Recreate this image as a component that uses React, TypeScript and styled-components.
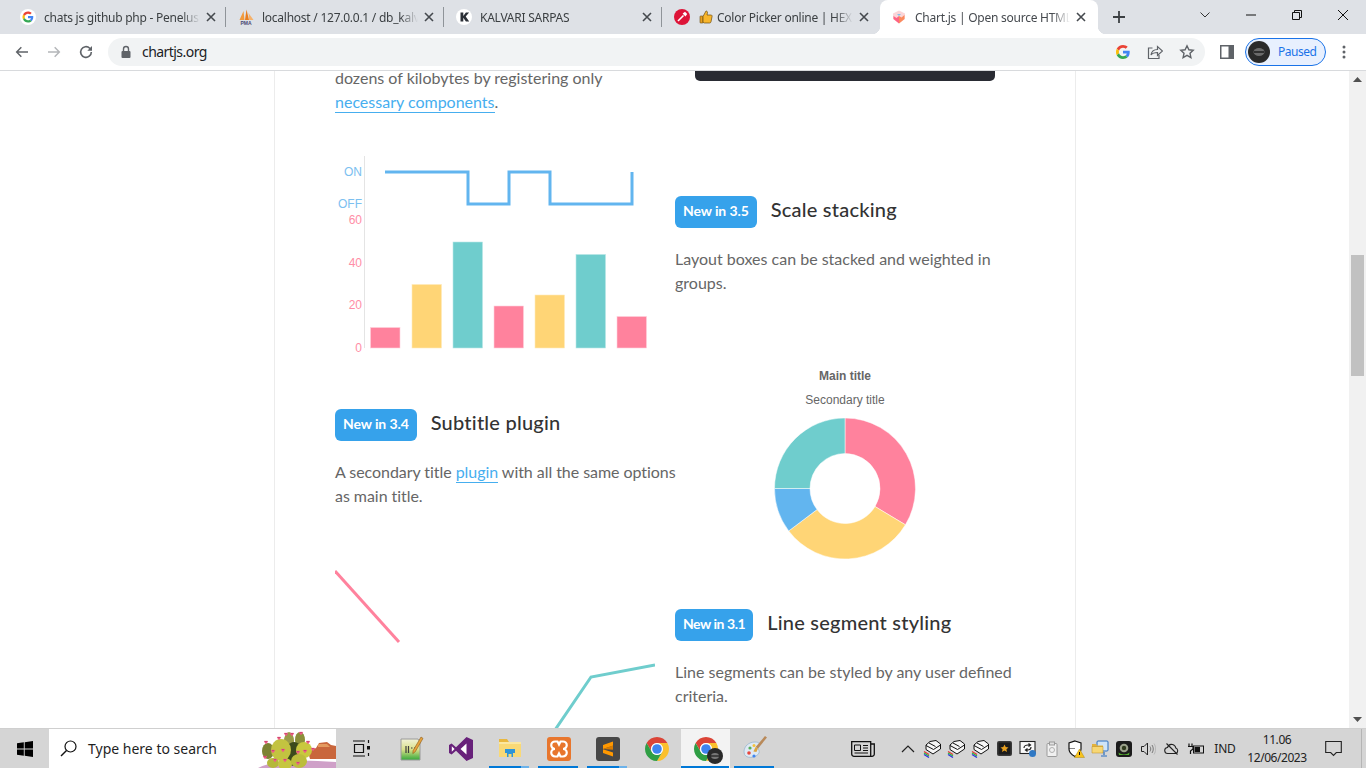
import { FC, ReactNode } from "react";
import styled, { createGlobalStyle } from "styled-components";

const UI_FONT = `"Noto Sans", "Open Sans", sans-serif`;
const PAGE_FONT = `Lato, "Open Sans", sans-serif`;
const CHART_FONT = `"Liberation Sans", Arial, sans-serif`;

const Colors = {
  strip: "#dee1e6",
  pink: "#ff829d",
  yellow: "#ffd576",
  teal: "#6fcdcd",
  blue: "#62b5ef",
  badge: "#36a2eb",
  link: "#46aeef",
  body: "#666666",
  heading: "#333333",
  taskbar: "#d5d5d5",
  taskBlue: "#0078d7",
};

const GlobalStyle = createGlobalStyle`
  html, body { margin: 0; padding: 0; background: #fff; overflow: hidden; }
  * { box-sizing: border-box; }
  svg { display: block; flex: none; }
`;

const Screen = styled.div`
  width: 1366px;
  height: 768px;
  display: flex;
  flex-direction: column;
  overflow: hidden;
  font-family: ${UI_FONT};
`;

/* ---------- tabs ---------- */
const TabStrip = styled.div`
  height: 34px;
  flex: none;
  display: flex;
  padding-left: 8px;
  background: ${Colors.strip};
`;
const Tab = styled.div<{ $active?: boolean; $sep?: boolean }>`
  position: relative;
  width: 218px;
  height: 34px;
  display: flex;
  align-items: center;
  padding: 0 ${(p) => (p.$active ? 11 : p.$sep ? 8 : 10)}px 0 ${(p) => (p.$active ? 11 : 12)}px;
  color: ${(p) => (p.$active ? "#45494e" : "#3c4043")};
  background: ${(p) => (p.$active ? "#fff" : "transparent")};
  border-radius: 8px 8px 0 0;
  border-right: ${(p) => (p.$sep ? "1px solid #9aa0a6" : "none")};
  ${(p) =>
    p.$sep &&
    `border-image: linear-gradient(to bottom, transparent 8px, #8f9499 8px, #8f9499 26px, transparent 26px) 1;`}
  ${(p) =>
    p.$active &&
    `
    &::before, &::after {
      content: "";
      position: absolute;
      bottom: 0;
      width: 8px;
      height: 8px;
    }
    &::before { left: -8px; background: radial-gradient(circle at 0 0, transparent 8px, #fff 8.5px); }
    &::after { right: -8px; background: radial-gradient(circle at 100% 0, transparent 8px, #fff 8.5px); }
  `}
`;
const Favicon = styled.span`
  width: 16px;
  height: 16px;
  flex: none;
  margin-right: 8px;
`;
const ThumbSlot = styled.span`
  width: 14px;
  height: 14px;
  flex: none;
  margin: 0 4px 0 1px;
`;
const TabTitle = styled.span`
  flex: 1;
  min-width: 0;
  overflow: hidden;
  white-space: nowrap;
  font-size: 12px;
  letter-spacing: -0.25px;
  -webkit-mask-image: linear-gradient(to right, #000 calc(100% - 18px), transparent);
  mask-image: linear-gradient(to right, #000 calc(100% - 18px), transparent);
`;
const TabClose = styled.span`
  width: 12px;
  height: 12px;
  flex: none;
  margin-left: 5px;
`;
const NewTab = styled.div`
  width: 22px;
  margin-left: 10px;
  display: flex;
  align-items: center;
  justify-content: center;
`;
const WindowButtons = styled.div`
  margin-left: auto;
  display: flex;
`;
const WindowButton = styled.div`
  width: 46px;
  height: 30px;
  display: flex;
  align-items: center;
  justify-content: center;
`;

/* ---------- toolbar ---------- */
const Toolbar = styled.div`
  height: 37px;
  flex: none;
  display: flex;
  align-items: center;
  padding: 0 0 1px 6px;
  background: #fff;
  border-bottom: 1px solid #d8dadd;
`;
const NavButton = styled.div`
  width: 32px;
  height: 28px;
  display: flex;
  align-items: center;
  justify-content: center;
`;
const Omnibox = styled.div`
  width: 1097px;
  height: 28px;
  margin-left: 6px;
  padding: 0 2px 0 11px;
  display: flex;
  align-items: center;
  border-radius: 14px;
  background: #f1f3f4;
`;
const Url = styled.span`
  flex: 1;
  margin-left: 9px;
  font-size: 14px;
  letter-spacing: -0.55px;
  color: #202124;
`;
const OmniAction = styled.div`
  width: 32px;
  display: flex;
  justify-content: center;
`;
const SidePanel = styled.div`
  width: 40px;
  margin-left: 2px;
  display: flex;
  justify-content: center;
`;
const Profile = styled.div`
  width: 81px;
  height: 28px;
  margin-left: -2px;
  padding-left: 2px;
  display: flex;
  align-items: center;
  gap: 8px;
  border: 1px solid #1a73e8;
  border-radius: 14px;
  background: #e8f0fe;
  color: #1a73e8;
  font-size: 12px;
  letter-spacing: -0.5px;
`;
const MenuDots = styled.div`
  width: 36px;
  display: flex;
  justify-content: center;
`;

/* ---------- page ---------- */
const Viewport = styled.div`
  flex: 1;
  min-height: 0;
  display: flex;
  background: #fff;
`;
const PageArea = styled.div`
  flex: 1;
  min-width: 0;
  display: flex;
  overflow: hidden;
`;
const Article = styled.div`
  width: 802px;
  flex: none;
  margin-left: 274px;
  padding-left: 60px;
  border-left: 1px solid #ececec;
  border-right: 1px solid #ececec;
`;
const Scrolled = styled.div`
  margin-top: -5px;
`;
const Row = styled.div<{ $height: number; $gap?: number }>`
  display: grid;
  grid-template-columns: 340px 340px;
  height: ${(p) => p.$height}px;
  margin-top: ${(p) => p.$gap ?? 0}px;
`;
const Feature = styled.div<{ $top: number }>`
  padding-top: ${(p) => p.$top}px;
`;
const Heading = styled.div`
  display: flex;
  align-items: center;
  gap: 14px;
  margin-bottom: 19px;
`;
const Badge = styled.span<{ $narrow?: boolean }>`
  height: 32px;
  padding: 0 8px 4px;
  display: flex;
  align-items: center;
  border-radius: 6px;
  background: ${Colors.badge};
  color: #fff;
  font-family: ${PAGE_FONT};
  font-size: 14px;
  font-weight: 700;
  letter-spacing: ${(p) => (p.$narrow ? "-0.45px" : "-0.1px")};
`;
const Title = styled.h3`
  margin: 0;
  padding-bottom: 7px;
  font-family: ${PAGE_FONT};
  font-size: 20px;
  font-weight: 500;
  letter-spacing: 0.22px;
  color: ${Colors.heading};
`;
const Text = styled.p<{ $bleed?: boolean }>`
  margin: 0 ${(p) => (p.$bleed ? "-10px" : "0")} 0 0;
  font-family: ${PAGE_FONT};
  font-size: 16px;
  line-height: 24px;
  letter-spacing: ${(p) => (p.$bleed ? "-0.05px" : "0")};
  color: ${Colors.body};
`;
const TextLink = styled.a`
  color: ${Colors.link};
  padding-bottom: 1px;
  border-bottom: 1px solid ${Colors.link};
`;
const CodeEnd = styled.div`
  width: 300px;
  height: 15px;
  margin-left: 20px;
  border-radius: 0 0 5px 5px;
  background: #292b33;
`;

const Scrollbar = styled.div`
  width: 17px;
  flex: none;
  padding: 0 2px;
  display: flex;
  flex-direction: column;
  align-items: center;
  background: #f1f1f1;
`;
const ScrollArrow = styled.div<{ $down?: boolean }>`
  height: 17px;
  flex: none;
  display: flex;
  align-items: center;
  justify-content: center;
  transform: ${(p) => (p.$down ? "rotate(180deg)" : "none")};
`;
const ScrollTrack = styled.div`
  flex: 1;
  width: 100%;
  padding-top: 167px;
`;
const ScrollThumb = styled.div`
  height: 121px;
  background: #c1c1c1;
`;

/* ---------- taskbar ---------- */
const Taskbar = styled.div`
  height: 40px;
  flex: none;
  display: flex;
  background: ${Colors.taskbar};
  border-top: 1px solid #cfcfcf;
`;
const StartButton = styled.div`
  width: 49px;
  display: flex;
  align-items: center;
  justify-content: center;
`;
const SearchBox = styled.div`
  width: 287px;
  display: flex;
  align-items: center;
  padding-left: 11px;
  background: #fff;
  color: #1f1f1f;
  overflow: hidden;
`;
const SearchText = styled.span`
  margin-left: 11px;
  font-size: 14px;
  white-space: nowrap;
  flex: 1;
`;
const TaskView = styled.div`
  width: 51px;
  display: flex;
  align-items: center;
  justify-content: center;
`;
const AppSlot = styled.div<{ $running?: boolean; $active?: boolean; $stack?: boolean }>`
  position: relative;
  width: 49px;
  display: flex;
  align-items: center;
  justify-content: center;
  background: ${(p) => (p.$active ? "#f3f3f3" : "transparent")};
  &::after {
    content: ${(p) => (p.$running ? '""' : "none")};
    position: absolute;
    bottom: 0;
    left: ${(p) => (p.$active ? 0 : "4px")};
    right: ${(p) => (p.$active ? "1px" : "5px")};
    height: 2px;
    background: ${(p) =>
      p.$stack
        ? `linear-gradient(to right, ${Colors.taskBlue} 80%, #6cb2ea 80%)`
        : Colors.taskBlue};
  }
`;
const ProfileDot = styled.span`
  position: absolute;
  left: 26px;
  top: 19px;
`;
const Tray = styled.div`
  margin-left: auto;
  margin-right: 4px;
  display: flex;
  align-items: center;
  height: 100%;
  border-right: 1px solid #b5b5b5;
  padding-right: 7px;
`;
const NewsSlot = styled.div`
  width: 48px;
  margin-right: 9px;
  display: flex;
  justify-content: center;
`;
const TraySlot = styled.div`
  width: 24px;
  display: flex;
  justify-content: center;
`;
const Lang = styled.div`
  width: 34px;
  text-align: center;
  font-size: 12px;
  letter-spacing: -0.2px;
  color: #222;
`;
const Clock = styled.div`
  width: 70px;
  text-align: center;
  font-size: 12px;
  line-height: 18px;
  letter-spacing: -0.45px;
  color: #222;
`;
const NotifySlot = styled.div`
  width: 42px;
  display: flex;
  justify-content: center;
`;

/* ---------- small icons ---------- */
const Ico: FC<{ size?: number; w?: number; h?: number; view?: string; children: ReactNode }> = ({
  size = 16,
  w,
  h,
  view = "0 0 24 24",
  children,
}) => (
  <svg width={w ?? size} height={h ?? size} viewBox={view} fill="none">
    {children}
  </svg>
);

const GoogleG: FC<{ size?: number }> = ({ size = 16 }) => (
  <Ico size={size} view="0 0 48 48">
    <path fill="#EA4335" d="M24 9.5c3.54 0 6.71 1.22 9.21 3.6l6.85-6.85C35.9 2.38 30.47 0 24 0 14.62 0 6.51 5.38 2.56 13.22l7.98 6.19C12.43 13.72 17.74 9.5 24 9.5z" />
    <path fill="#4285F4" d="M46.98 24.55c0-1.57-.15-3.09-.38-4.55H24v9.02h12.94c-.58 2.96-2.26 5.48-4.78 7.18l7.73 6c4.51-4.18 7.09-10.36 7.09-17.65z" />
    <path fill="#FBBC05" d="M10.53 28.59c-.48-1.45-.76-2.99-.76-4.59s.27-3.14.76-4.59l-7.98-6.19C.92 16.46 0 20.12 0 24c0 3.88.92 7.54 2.56 10.78l7.97-6.19z" />
    <path fill="#34A853" d="M24 48c6.48 0 11.93-2.13 15.89-5.81l-7.73-6c-2.15 1.45-4.92 2.3-8.16 2.3-6.26 0-11.57-4.22-13.47-9.91l-7.98 6.19C6.51 42.62 14.62 48 24 48z" />
  </Ico>
);

const GoogleFavicon = () => (
  <Ico view="0 0 16 16">
    <circle cx="8" cy="8" r="8" fill="#fff" />
    <g transform="translate(2.5 2.5) scale(0.229)">
      <path fill="#EA4335" d="M24 9.5c3.54 0 6.71 1.22 9.21 3.6l6.85-6.85C35.9 2.38 30.47 0 24 0 14.62 0 6.51 5.38 2.56 13.22l7.98 6.19C12.43 13.72 17.74 9.5 24 9.5z" />
      <path fill="#4285F4" d="M46.98 24.55c0-1.57-.15-3.09-.38-4.55H24v9.02h12.94c-.58 2.96-2.26 5.48-4.78 7.18l7.73 6c4.51-4.18 7.09-10.36 7.09-17.65z" />
      <path fill="#FBBC05" d="M10.53 28.59c-.48-1.45-.76-2.99-.76-4.59s.27-3.14.76-4.59l-7.98-6.19C.92 16.46 0 20.12 0 24c0 3.88.92 7.54 2.56 10.78l7.97-6.19z" />
      <path fill="#34A853" d="M24 48c6.48 0 11.93-2.13 15.89-5.81l-7.73-6c-2.15 1.45-4.92 2.3-8.16 2.3-6.26 0-11.57-4.22-13.47-9.91l-7.98 6.19C6.51 42.62 14.62 48 24 48z" />
    </g>
  </Ico>
);

const PmaFavicon = () => (
  <Ico view="0 0 16 16">
    <path fill="#f29a3c" d="M1.500 11 5.500 2 6.500 11z" />
    <path fill="#e87d1e" d="M7 11 8.500 0.500 11 11z" />
    <path fill="#f6b26b" d="M11.200 11 10.500 4 15.500 11z" />
    <text x="8" y="15.500" textAnchor="middle" fontFamily={CHART_FONT} fontSize="5" fontWeight="700" fill="#4a4a72">PMA</text>
  </Ico>
);

const KFavicon = () => (
  <Ico view="0 0 16 16">
    <circle cx="8" cy="8" r="8" fill="#fff" />
    <path fill="#2b2f36" d="M4.500 3.500h2.800v3.400l2.600-3.400h3.200L9.700 7.600l3.500 4.900H9.900L7.300 8.800v3.700H4.500z" />
  </Ico>
);

const PickerFavicon = () => (
  <Ico view="0 0 16 16">
    <circle cx="8" cy="8" r="8" fill="#dd1438" />
    <path stroke="#fff" strokeWidth="1.600" d="M4 12 9.500 6.500" />
    <path fill="#fff" d="M8.600 4.600 11 2.800l2.200 2.200-1.800 2.400z" />
  </Ico>
);

const ThumbIcon = () => (
  <Ico w={14} h={14} view="0 0 14 14">
    <rect x="1" y="6" width="3" height="7" rx=".6" fill="#e8a020" stroke="#6a4a10" strokeWidth=".6" />
    <path fill="#f8b62c" stroke="#6a4a10" strokeWidth=".7" d="M4 6.500 7 1c1.300 0 1.700 1 1.400 2.200L8 5h4c1 0 1.400 1 1 1.800l-1 5c-.2.8-.7 1.200-1.400 1.200H5.500L4 12.400z" />
  </Ico>
);

const ChartFavicon = () => (
  <Ico view="0 0 16 16">
    <path fill="#fbd5d8" d="M8 1.500 14 4.500v5.500l-6 4.500L2 10V4.500z" />
    <path fill="#fe6384" d="M2.500 7 5.500 9 8 7v7.500L2.500 10z" />
    <path fill="#fb8a5c" d="M13.500 6 10.500 8.500 8 7v7.500l5.500-4.500z" />
    <path fill="#7fc4e8" d="M6 5h4L8 7z" />
  </Ico>
);

const CloseX = () => (
  <Ico size={12} view="0 0 12 12">
    <path stroke="#45494e" strokeWidth="1.600" d="M2 2l8 8M10 2l-8 8" />
  </Ico>
);

const ChromeLogo: FC<{ size?: number }> = ({ size = 24 }) => (
  <Ico size={size} view="4 4 40 40">
    <path fill="#db4437" d="M6.680 14A20 20 0 0 1 41.320 14H24A10 10 0 0 0 15.340 29z" />
    <path fill="#fbc02d" d="M41.320 14A20 20 0 0 1 24 44L32.660 29A10 10 0 0 0 24 14z" />
    <path fill="#2f9e44" d="M24 44A20 20 0 0 1 6.680 14L15.340 29A10 10 0 0 0 32.660 29z" />
    <circle cx="24" cy="24" r="10" fill="#fff" />
    <circle cx="24" cy="24" r="8" fill="#3f84ef" />
  </Ico>
);

const Cactus = () => (
  <svg width="78" height="38" viewBox="0 0 78 38">
    <path fill="#cfa0c8" d="M0 38c14-7 34-9 78-6v6z" />
    <path fill="#c9663c" d="M50 22l8-4 3-5 8-1 4 3 5 1v13H52z" />
    <path fill="#e49a5f" d="M60 14h9l3 3H60z" />
    <g transform="translate(-5 0)">
      <ellipse cx="15" cy="21" rx="6" ry="8" fill="#7d8232" />
      <ellipse cx="36" cy="11" rx="5" ry="9" fill="#9a9c48" />
      <ellipse cx="47" cy="10" rx="5" ry="8" fill="#8b8f3a" />
      <ellipse cx="41" cy="24" rx="9" ry="12" fill="#3c4a1c" />
      <ellipse cx="28" cy="20" rx="10" ry="11" fill="#c3c340" />
      <ellipse cx="51" cy="20" rx="8" ry="8" fill="#c9c83e" />
      <ellipse cx="46" cy="31" rx="8" ry="7" fill="#bcbd3c" />
      <ellipse cx="20" cy="33" rx="6" ry="5" fill="#b5b83a" />
      <ellipse cx="32" cy="34" rx="7" ry="6" fill="#c6c640" />
      {[[13, 12], [20, 21], [26, 8], [33, 4], [39, 4], [48, 3], [55, 12], [30, 20], [45, 22], [52, 21], [12, 27], [22, 30], [32, 30], [45, 33], [60, 19]].map(([x, y]) => (
        <path key={`${x}-${y}`} stroke="#ef5a86" strokeWidth="1.600" d={`M${x - 1.5} ${y - 1}l1.500 2 1.500-2`} />
      ))}
    </g>
  </svg>
);

const NotepadIcon = () => (
  <Ico w={24} h={26} view="0 0 24 26">
    <defs>
      <linearGradient id="npad" x1="0" y1="0" x2="0" y2="1">
        <stop offset="0" stopColor="#f2f2d8" />
        <stop offset=".5" stopColor="#d9e08a" />
        <stop offset="1" stopColor="#35a83a" />
      </linearGradient>
    </defs>
    <path fill="url(#npad)" stroke="#9a9a9a" d="M1 3h17l2 3v18H1z" />
    <path stroke="#3d3d3d" strokeWidth="1.200" d="M6 10v7M8.500 10v7M11 12h1.500M14 12h1" />
    <path fill="#e8a33d" stroke="#8a5a18" strokeWidth=".6" d="M21 1l2 1.400-7.800 13.400-2.400 1.800.3-3z" />
  </Ico>
);

const VsIcon = () => (
  <Ico w={24} h={24} view="0 0 24 24">
    <path fill="#68217a" d="M17.500 0 24 3v18l-6.500 3L7 13.800 2.600 17.400 0 16V8l2.600-1.400L7 10.200z" />
    <path fill="#fff" d="M17.500 6.500 11.500 12l6 5.500zM2.800 9.300v5.400L5.600 12z" />
  </Ico>
);

const FolderIcon = () => (
  <Ico w={22} h={20} view="0 0 22 20">
    <path fill="#e9b83f" d="M0 0h8l2 3H0z" />
    <path fill="#f9d976" d="M0 3h22v15H0z" />
    <path fill="#fbe7a0" d="M0 3h22v2H0z" />
    <path fill="#2f95d8" d="M6 10h10v4h-2v4H8v-4H6z" />
    <path fill="#f9d976" d="M9.500 15h3v3h-3z" />
  </Ico>
);

const XamppIcon = () => (
  <Ico size={24} view="0 0 24 24">
    <rect width="24" height="24" rx="3" fill="#e8762d" />
    <path stroke="#fff" strokeWidth="2.200" d="M8 4.500h2.500l1.500 3 1.500-3H16a3.500 3.500 0 0 1 0 7.500 3.500 3.500 0 0 1 0 7.500h-2.500L12 16.500l-1.500 3H8A3.500 3.500 0 0 1 8 12a3.500 3.500 0 0 1 0-7.500z" />
  </Ico>
);

const SublimeIcon = () => (
  <Ico size={24} view="0 0 24 24">
    <rect width="24" height="24" rx="3" fill="#474747" />
    <path fill="#ff9800" d="M17 4.500v4.200L7 12V8zM7 12.200l10 3.300v4L7 16z" />
    <path fill="#d67a00" d="M7 12l10-3.400v4.200z" />
  </Ico>
);

const PaintIcon = () => (
  <Ico size={26} view="0 0 26 26">
    <path fill="#dfe9f3" stroke="#8fb0cc" strokeWidth=".7" d="M2 16c0-6 5-10 11-10 4 0 6 2 4 5-2 2 1 3 0 6-2 5-15 7-15-1z" />
    <circle cx="7" cy="17" r="1.800" fill="#e8453c" />
    <circle cx="8" cy="12" r="1.600" fill="#57b05a" />
    <circle cx="12" cy="9.500" r="1.500" fill="#f5c33b" />
    <circle cx="12" cy="20" r="1.600" fill="#3f84ef" />
    <path fill="#b98a5a" d="M23 0l2 1.500-9 11-2.400-1.600z" />
    <path fill="#d9a441" d="M13.600 10.900l2.400 1.600-1.600 3.500-3-.6z" />
  </Ico>
);

const Printer = () => (
  <Ico size={18} view="0 0 18 18">
    <path fill="#f6f6f6" stroke="#111" strokeWidth="1" d="M7 1.500l6-1 4.500 3.500v5L10 14 3 9.500V5z" />
    <path stroke="#111" strokeWidth="1" d="M3 5.500l7.500 4 7-4.500M6 3l6.500 3.500" />
    <path stroke="#e33" strokeWidth="1.300" d="M1 11.500l5 3" />
    <path stroke="#2b4" strokeWidth="1.300" d="M1 13l5 3" />
    <path stroke="#33d" strokeWidth="1.300" d="M1 14.500l5 3" />
  </Ico>
);

const Tray1 = () => (
  <Ico size={15} view="0 0 15 15">
    <rect width="15" height="15" rx="2" fill="#3a3a3a" />
    <rect x="1.500" y="1.500" width="12" height="12" fill="#1c1c1c" />
    <path fill="#e8a020" d="M7.500 3.500l1.200 2.600 2.800.3-2.100 1.800.6 2.800-2.500-1.400L5 11l.6-2.800-2.100-1.800 2.800-.3z" />
  </Ico>
);
const Tray2 = () => (
  <Ico size={18} view="0 0 18 18">
    <rect x="1" y="1.500" width="15" height="12" fill="#fafafa" stroke="#222" strokeWidth="1.100" />
    <path stroke="#222" strokeWidth="1.200" d="M5 8c0-2 2-3 4-3h2M9.500 3.500 11.500 5 9.500 6.500M12 7c0 2-1.500 3-3.500 3H7M8.500 8.500 6.500 10l2 1.500" />
    <circle cx="13.500" cy="13.500" r="3.500" fill="#2f78c4" />
  </Ico>
);
const Tray3 = () => (
  <Ico size={16} view="0 0 16 16">
    <rect x="3" y="2.500" width="10" height="13" rx="1" fill="#f0f0f0" stroke="#9a9a9a" />
    <rect x="5.500" y="1" width="5" height="3" fill="#e0e0e0" stroke="#9a9a9a" />
    <circle cx="8" cy="9" r="2.500" stroke="#b0b0b0" />
  </Ico>
);
const Tray4 = () => (
  <Ico size={18} view="0 0 18 18">
    <path fill="#fff" stroke="#111" strokeWidth="1.200" d="M8 1l6 2v6c0 4-3 6-6 7.500C5 15 2 13 2 9V3z" />
    <path fill="#111" d="M8 1v7.500H2V9h6v7.500L8 8.500z" />
    <path fill="#f8c31c" stroke="#a07a00" strokeWidth=".4" d="M12.500 9l5 8.500h-10z" />
    <path stroke="#111" d="M12.500 12v3" />
  </Ico>
);
const Tray5 = () => (
  <Ico size={18} view="0 0 18 18">
    <rect x="6" y="1" width="11" height="10" rx="1" fill="#cfe4f8" stroke="#2a6fc0" />
    <path fill="#e3b23c" d="M1 4h4l1 1.500h6V13H1z" />
    <path fill="#f7d774" d="M1 6.500h11V13H1z" stroke="#b98a20" strokeWidth=".5" />
    <path stroke="#2a6fc0" strokeWidth="1.200" d="M13 12v3M10 16h6" />
  </Ico>
);
const Tray6 = () => (
  <Ico size={16} view="0 0 16 16">
    <rect width="16" height="16" rx="3" fill="#1b1b1b" />
    <circle cx="8" cy="7" r="4.300" fill="#9aa08a" />
    <circle cx="8" cy="7" r="2.200" fill="#2f3a1d" />
    <path fill="#55b030" d="M2.500 11.500C5 14 11 14 13.500 11.500L13 14H3z" />
  </Ico>
);
const Speaker = () => (
  <Ico size={16} view="0 0 16 16">
    <path stroke="#222" d="M1.500 5.500h2.500L7.500 2v12L4 10.500H1.500z" />
    <path stroke="#777" d="M10 5.500c1 1.500 1 3.500 0 5M12 4c1.700 2.500 1.700 5.500 0 8" />
    <path stroke="#b5b5b5" d="M14 2.500c2.200 3.500 2.200 7.500 0 11" />
  </Ico>
);
const CloudOff = () => (
  <Ico size={16} view="0 0 16 16">
    <path fill="#d5d5d5" stroke="#222" strokeWidth="1.100" d="M4 12.500a3 3 0 0 1-.5-6C4.300 4 6.500 3 8.500 3.500c2 .5 3 1.800 3.300 3.500a3 3 0 0 1 .2 5.500z" />
    <path stroke="#222" strokeWidth="1.100" d="M2.500 2.500l11 11" />
  </Ico>
);
const BatteryPlug = () => (
  <Ico size={16} view="0 0 16 16">
    <path stroke="#111" strokeWidth="1.200" d="M1 2.500v3M4 2.500v3M0 5.500h5V8l-2.500 2V13" />
    <rect x="5.500" y="5" width="10" height="7" fill="#d5d5d5" stroke="#111" />
    <rect x="6.500" y="6" width="5.500" height="5" fill="#111" />
  </Ico>
);

/* ---------- charts ---------- */
const AxisText = styled.text<{ $color: string }>`
  font-family: ${CHART_FONT};
  font-size: 12px;
  fill: ${(p) => p.$color};
`;

const bars = [
  { x: 370.5, top: 327.5, fill: Colors.pink, edge: "#ffd1dc" },
  { x: 412, top: 284.5, fill: Colors.yellow, edge: "#ffeabb" },
  { x: 453, top: 242, fill: Colors.teal, edge: "#b8e6e6" },
  { x: 494, top: 306, fill: Colors.pink, edge: "#ffd1dc" },
  { x: 535, top: 295, fill: Colors.yellow, edge: "#ffeabb" },
  { x: 576, top: 254.5, fill: Colors.teal, edge: "#b8e6e6" },
  { x: 617, top: 316.5, fill: Colors.pink, edge: "#ffd1dc" },
];

const StackedChart = () => (
  <svg width="320" height="215" viewBox="335 150 320 215" fill="none">
    <path stroke="#e4e4e4" d="M364.500 156V348" />
    <AxisText $color="#7cc0f0" x="362" y="176" textAnchor="end">ON</AxisText>
    <AxisText $color="#7cc0f0" x="362" y="208" textAnchor="end">OFF</AxisText>
    {[["60", 224], ["40", 267], ["20", 309], ["0", 352]].map(([label, y]) => (
      <AxisText key={label} $color="#ff8ea6" x="362" y={y} textAnchor="end">{label}</AxisText>
    ))}
    <path stroke={Colors.blue} strokeWidth="3" d="M385 172H468V204H509V172H550V204H632V172" />
    {bars.map((b) => (
      <rect key={b.x} x={b.x} y={b.top} width="29.500" height={348 - b.top} fill={b.fill} stroke={b.edge} strokeWidth=".6" />
    ))}
  </svg>
);

const arc = (from: number, to: number) => {
  const cx = 845;
  const cy = 488.5;
  const R = 70.5;
  const r = 35;
  const pt = (rad: number, deg: number) => {
    const a = ((deg - 90) * Math.PI) / 180;
    return `${cx + rad * Math.cos(a)} ${cy + rad * Math.sin(a)}`;
  };
  const large = to - from > 180 ? 1 : 0;
  return `M${pt(R, from)}A${R} ${R} 0 ${large} 1 ${pt(R, to)}L${pt(r, to)}A${r} ${r} 0 ${large} 0 ${pt(r, from)}Z`;
};

const slices = [
  { from: 0, to: 121, fill: Colors.pink },
  { from: 121, to: 233, fill: Colors.yellow },
  { from: 233, to: 270, fill: Colors.blue },
  { from: 270, to: 360, fill: Colors.teal },
];

const DoughnutChart = () => (
  <svg width="340" height="200" viewBox="675 365 340 200" fill="none">
    <AxisText $color="#666" x="845" y="380" textAnchor="middle" fontWeight="700">Main title</AxisText>
    <AxisText $color="#666" x="845" y="404" textAnchor="middle">Secondary title</AxisText>
    {slices.map((s) => (
      <path key={s.from} d={arc(s.from, s.to)} fill={s.fill} stroke="#fff" strokeWidth=".5" />
    ))}
  </svg>
);

const SegmentChart = () => (
  <svg width="320" height="200" viewBox="335 565 320 200" fill="none">
    <path stroke={Colors.pink} strokeWidth="3" d="M335 571 399 642" />
    <path stroke={Colors.teal} strokeWidth="3" d="M655 665 591 677 540 752" />
  </svg>
);

/* ---------- data ---------- */
const tabs = [
  { title: "chats js github php - Penelusuran Google", icon: <GoogleFavicon />, sep: true },
  { title: "localhost / 127.0.0.1 / db_kalvari", icon: <PmaFavicon />, sep: true },
  { title: "KALVARI SARPAS", icon: <KFavicon />, sep: true },
  { title: "Color Picker online | HEX Color Picker", icon: <PickerFavicon />, thumb: true },
  { title: "Chart.js | Open source HTML5 Charts", icon: <ChartFavicon />, active: true },
];

const trayIcons = [<Printer />, <Printer />, <Printer />, <Tray1 />, <Tray2 />, <Tray3 />, <Tray4 />, <Tray5 />, <Tray6 />, <Speaker />, <CloudOff />, <BatteryPlug />];

export default function App() {
  return (
    <Screen>
      <GlobalStyle />
      <TabStrip>
        {tabs.map((t) => (
          <Tab key={t.title} $active={t.active} $sep={t.sep}>
            <Favicon>{t.icon}</Favicon>
            {t.thumb && (
              <ThumbSlot>
                <ThumbIcon />
              </ThumbSlot>
            )}
            <TabTitle>{t.title}</TabTitle>
            <TabClose>
              <CloseX />
            </TabClose>
          </Tab>
        ))}
        <NewTab>
          <Ico size={14} view="0 0 14 14">
            <path stroke="#3c4043" strokeWidth="1.800" d="M7 1v12M1 7h12" />
          </Ico>
        </NewTab>
        <WindowButtons>
          <WindowButton>
            <Ico size={12} view="0 0 12 12">
              <path stroke="#333" d="M1.500 3.500 6 8l4.500-4.500" />
            </Ico>
          </WindowButton>
          <WindowButton>
            <Ico size={12} view="0 0 12 12">
              <path stroke="#111" d="M1 6h10" />
            </Ico>
          </WindowButton>
          <WindowButton>
            <Ico size={12} view="0 0 12 12">
              <path stroke="#111" d="M1.500 3.500h7v7h-7zM3.500 3.500v-2h7v7h-2" />
            </Ico>
          </WindowButton>
          <WindowButton>
            <Ico size={12} view="0 0 12 12">
              <path stroke="#111" d="M1 1l10 10M11 1 1 11" />
            </Ico>
          </WindowButton>
        </WindowButtons>
      </TabStrip>

      <Toolbar>
        <NavButton>
          <Ico>
            <path stroke="#5f6368" strokeWidth="2.200" d="M21 12H4M11 5l-7 7 7 7" />
          </Ico>
        </NavButton>
        <NavButton>
          <Ico>
            <path stroke="#b4b6b9" strokeWidth="2.200" d="M3 12h17M13 5l7 7-7 7" />
          </Ico>
        </NavButton>
        <NavButton>
          <Ico>
            <path stroke="#5f6368" strokeWidth="2.400" d="M20 12a8 8 0 1 1-2.400-5.700L20 8.500" />
            <path fill="#5f6368" d="M21 3v7h-7z" />
          </Ico>
        </NavButton>
        <Omnibox>
          <Ico size={14} view="0 0 14 14">
            <rect x="2.500" y="6" width="9" height="7" rx="1" fill="#5f6368" />
            <path stroke="#5f6368" strokeWidth="1.400" d="M4.500 6V4a2.500 2.500 0 0 1 5 0v2" />
          </Ico>
          <Url>chartjs.org</Url>
          <OmniAction>
            <GoogleG size={14} />
          </OmniAction>
          <OmniAction>
            <Ico size={16} view="0 0 16 16">
              <path stroke="#5f6368" strokeWidth="1.200" d="M5.500 4H1.500v10.500h10.500V11" />
              <path stroke="#5f6368" strokeWidth="1.200" d="M4 11c.5-3.500 3-5.500 6.500-5.500V2.500l5 4.500-5 4.500V8.500C8 8.500 5.500 9 4 11z" />
            </Ico>
          </OmniAction>
          <OmniAction>
            <Ico size={16} view="0 0 16 16">
              <path stroke="#5f6368" strokeWidth="1.400" d="M8 1.800l1.900 4 4.300.5-3.200 3 .9 4.300L8 11.400l-3.900 2.200.9-4.300-3.200-3 4.300-.5z" />
            </Ico>
          </OmniAction>
        </Omnibox>
        <SidePanel>
          <Ico size={14} view="0 0 14 14">
            <rect width="14" height="14" fill="#5f6368" />
            <rect x="1.500" y="1.500" width="7" height="11" fill="#fff" />
          </Ico>
        </SidePanel>
        <Profile>
          <Ico size={22} view="0 0 22 22">
            <circle cx="11" cy="11" r="11" fill="#2a2a2a" />
            <ellipse cx="11" cy="11" rx="5.500" ry="4" fill="#6b6b6b" />
            <path stroke="#1c1c1c" strokeWidth="1.500" d="M6 11h10" />
          </Ico>
          Paused
        </Profile>
        <MenuDots>
          <Ico size={16} view="0 0 16 16">
            <circle cx="8" cy="3" r="1.500" fill="#5f6368" />
            <circle cx="8" cy="8" r="1.500" fill="#5f6368" />
            <circle cx="8" cy="13" r="1.500" fill="#5f6368" />
          </Ico>
        </MenuDots>
      </Toolbar>

      <Viewport>
        <PageArea>
          <Article>
            <Scrolled>
              <Row $height={48}>
                <Text>
                  dozens of kilobytes by registering only{" "}
                  <TextLink>necessary components</TextLink>.
                </Text>
                <CodeEnd />
              </Row>
              <Row $height={215} $gap={36}>
                <StackedChart />
                <Feature $top={46}>
                  <Heading>
                    <Badge>New in 3.5</Badge>
                    <Title>Scale stacking</Title>
                  </Heading>
                  <Text>Layout boxes can be stacked and weighted in groups.</Text>
                </Feature>
              </Row>
              <Row $height={200}>
                <Feature $top={44}>
                  <Heading>
                    <Badge>New in 3.4</Badge>
                    <Title>Subtitle plugin</Title>
                  </Heading>
                  <Text $bleed>
                    A secondary title <TextLink>plugin</TextLink> with all the same options as main title.
                  </Text>
                </Feature>
                <DoughnutChart />
              </Row>
              <Row $height={200}>
                <SegmentChart />
                <Feature $top={44}>
                  <Heading>
                    <Badge $narrow>New in 3.1</Badge>
                    <Title>Line segment styling</Title>
                  </Heading>
                  <Text>Line segments can be styled by any user defined criteria.</Text>
                </Feature>
              </Row>
            </Scrolled>
          </Article>
        </PageArea>
        <Scrollbar>
          <ScrollArrow>
            <Ico size={9} view="0 0 9 9">
              <path fill="#505050" d="M4.500 2 9 7H0z" />
            </Ico>
          </ScrollArrow>
          <ScrollTrack>
            <ScrollThumb />
          </ScrollTrack>
          <ScrollArrow $down>
            <Ico size={9} view="0 0 9 9">
              <path fill="#505050" d="M4.500 2 9 7H0z" />
            </Ico>
          </ScrollArrow>
        </Scrollbar>
      </Viewport>

      <Taskbar>
        <StartButton>
          <Ico size={16} view="0 0 16 16">
            <path fill="#000" d="M0 2.300 6.800 1.300V7.500H0zM7.700 1.200 16 0V7.500H7.700zM0 8.400H6.800V14.700L0 13.700zM7.700 8.400H16V16L7.700 14.800z" />
          </Ico>
        </StartButton>
        <SearchBox>
          <Ico size={17} view="0 0 17 17">
            <circle cx="10.500" cy="6.500" r="5.500" stroke="#111" strokeWidth="1.200" />
            <path stroke="#111" strokeWidth="1.400" d="M6.500 10.500 1 16" />
          </Ico>
          <SearchText>Type here to search</SearchText>
          <Cactus />
        </SearchBox>
        <TaskView>
          <Ico size={17} view="0 0 17 17">
            <path stroke="#111" strokeWidth="1.200" d="M0 1h12M0 16h12M1.500 4.500h9v8h-9z" />
            <path stroke="#111" strokeWidth="1.200" d="M15.500 0v3M15.500 13v3" />
            <rect x="14" y="6" width="3" height="3.500" fill="#111" />
          </Ico>
        </TaskView>
        <AppSlot><NotepadIcon /></AppSlot>
        <AppSlot><VsIcon /></AppSlot>
        <AppSlot $running $stack><FolderIcon /></AppSlot>
        <AppSlot $running><XamppIcon /></AppSlot>
        <AppSlot $running $stack><SublimeIcon /></AppSlot>
        <AppSlot><ChromeLogo /></AppSlot>
        <AppSlot $running $active>
          <ChromeLogo />
          <ProfileDot>
            <Ico size={16} view="0 0 16 16">
              <circle cx="8" cy="8" r="8" fill="#2a2a2a" />
              <ellipse cx="8" cy="8" rx="4" ry="3" fill="#777" />
              <path stroke="#1c1c1c" strokeWidth="1.200" d="M4 8h8" />
            </Ico>
          </ProfileDot>
        </AppSlot>
        <AppSlot $running><PaintIcon /></AppSlot>
        <Tray>
          <NewsSlot>
            <Ico w={24} h={16} view="0 0 24 16">
              <path stroke="#111" strokeWidth="1.300" d="M.7.700h19v14.600H3a2.300 2.300 0 0 1-2.300-2.300zM19.700 3h3.600v10a2.300 2.300 0 0 1-2.300 2.300h-1.300" />
              <path stroke="#111" d="M3.500 4h6v5.500h-6zM12 4.500h5M12 7h5M12 9.500h5M3.500 12h13.500" />
            </Ico>
          </NewsSlot>
          <TraySlot>
            <Ico size={14} view="0 0 14 14">
              <path stroke="#222" strokeWidth="1.200" d="M1 10l6-6 6 6" />
            </Ico>
          </TraySlot>
          {trayIcons.map((icon, i) => (
            <TraySlot key={i}>{icon}</TraySlot>
          ))}
          <Lang>IND</Lang>
          <Clock>
            11.06
            <br />
            12/06/2023
          </Clock>
          <NotifySlot>
            <Ico size={17} view="0 0 17 17">
              <path stroke="#222" strokeWidth="1.100" d="M.7 1.500h15.600v11h-5l-2.800 3-2.800-3h-5z" />
            </Ico>
          </NotifySlot>
        </Tray>
      </Taskbar>
    </Screen>
  );
}
